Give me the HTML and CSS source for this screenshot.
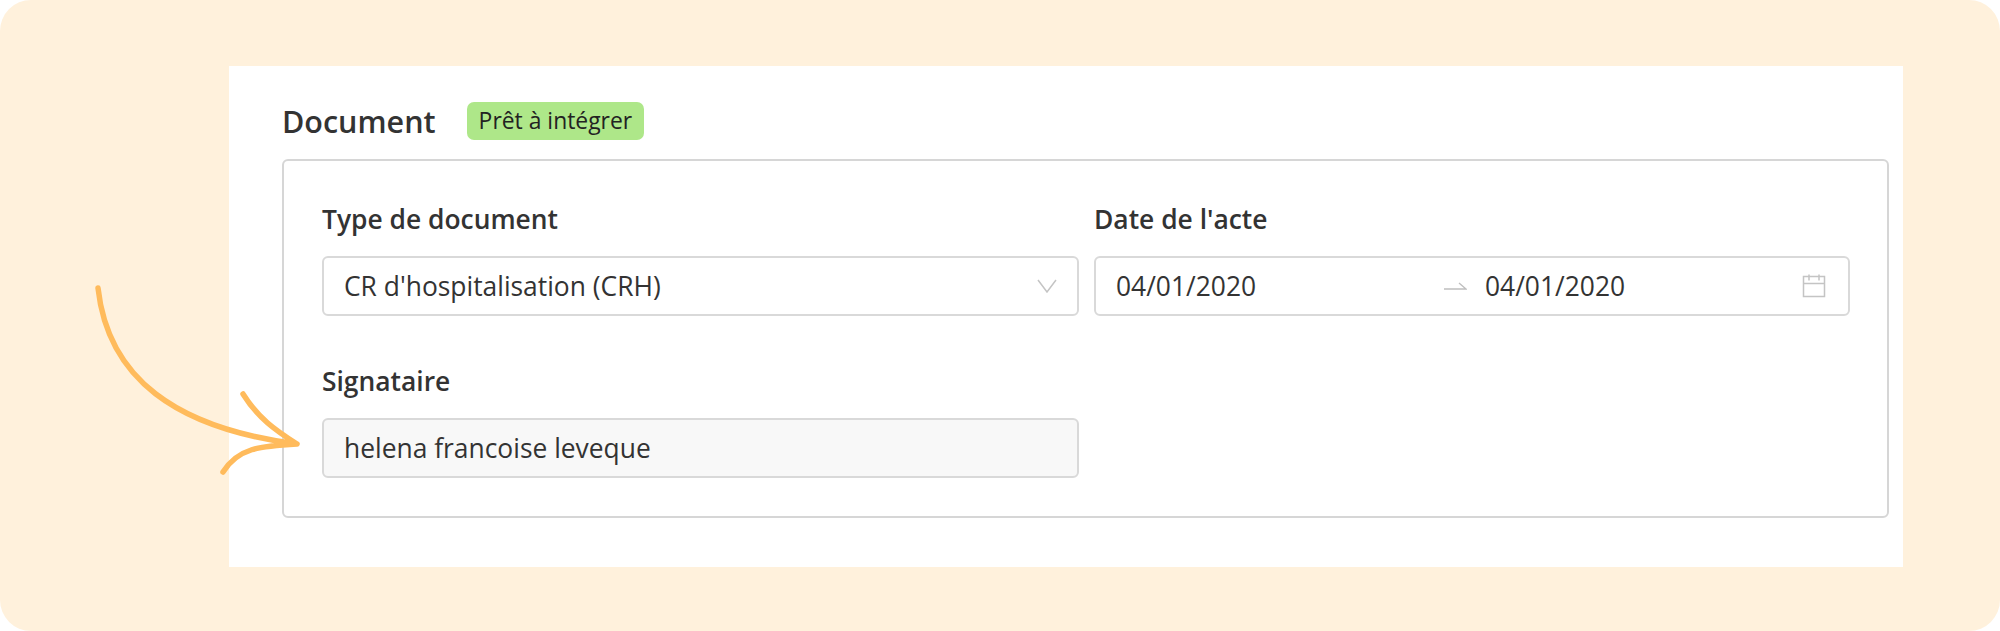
FILE: index.html
```html
<!DOCTYPE html>
<html lang="fr">
<head>
  <meta charset="UTF-8">
  <title>Document</title>
  <link rel="stylesheet" href="styles.css">
</head>
<body>

  <div class="frame">
    <div class="panel">
      <div class="doc-header">
        <h2>Document</h2>
        <span class="badge">Prêt à intégrer</span>
      </div>

      <div class="card">
        <div class="field">
          <label>Type de document</label>
          <div class="control">
            <span>CR d'hospitalisation (CRH)</span>
            <svg class="chevron" width="20" height="14" viewBox="0 0 20 14"><path d="M1 1 L10 13 L19 1" fill="none" stroke="#c4c4c4" stroke-width="1.5"/></svg>
          </div>
        </div>

        <div class="field">
          <label>Date de l'acte</label>
          <div class="control date-range">
            <span class="date-from">04/01/2020</span>
            <svg class="range-arrow" width="23" height="8" viewBox="0 0 23 8"><path d="M0 7 H22 L15 1" fill="none" stroke="#bfbfbf" stroke-width="1.4"/></svg>
            <span class="date-to">04/01/2020</span>
            <svg class="calendar" width="24" height="24" viewBox="0 0 24 24"><path d="M1.5 2.5 H22.5 V22.5 H1.5 Z M1.5 9.5 H22.5 M7 0.5 V6.5 M17 0.5 V6.5" fill="none" stroke="#c4c4c4" stroke-width="1.5"/></svg>
          </div>
        </div>

        <div class="field">
          <label>Signataire</label>
          <div class="control disabled">helena francoise leveque</div>
        </div>
      </div>
    </div>

    <!-- hand drawn arrow, sits over the panel edge -->
    <svg class="pointer" width="220" height="200" viewBox="0 0 220 200">
      <path d="M8 8 C18 98 85 148 207 164 M153 114 C168 138 185 150 207 164 C170 166 148 168 133 192" fill="none" stroke="#ffbb5c" stroke-width="5.5" stroke-linecap="round" stroke-linejoin="round"/>
    </svg>
  </div>

</body>
</html>
```

FILE: styles.css
```css
* {
  box-sizing: border-box;
}

body {
  margin: 0;
  background: #fff;
  font-family: 'Open Sans', sans-serif;
  color: #333;
}

.frame {
  position: relative;
  width: 2000px;
  height: 631px;
  padding: 66px 97px 64px 229px;
  background: #fff1dc;
  border-radius: 31px;
  overflow: hidden;
}

.panel {
  height: 100%;
  padding: 36px 14px 0 53px;
  background: #fff;
}

.doc-header {
  display: flex;
  align-items: center;
  gap: 31px;
  height: 38px;
  margin-bottom: 19px;
}

h2 {
  margin: 0;
  font-size: 30.5px;
  font-weight: 600;
  line-height: 38px;
}

.badge {
  display: block;
  padding: 0 12px;
  background: #aee789;
  border-radius: 7px;
  font-size: 22.9px;
  line-height: 38px;
  color: #222;
}

.card {
  display: grid;
  grid-template-columns: 757px 756px;
  align-content: start;
  column-gap: 15px;
  row-gap: 50px;
  height: 359px;
  padding: 43px 37px 0 38px;
  border: 2px solid #d6d6d6;
  border-radius: 6px;
}

label {
  display: block;
  margin-bottom: 22px;
  font-size: 26.4px;
  font-weight: 600;
  line-height: 30px;
}

.control {
  display: flex;
  align-items: center;
  justify-content: space-between;
  height: 60px;
  padding: 0 20px;
  border: 2px solid #d9d9d9;
  border-radius: 6px;
  font-size: 26.4px;
}

.disabled {
  background: #f8f8f8;
}

.date-range {
  justify-content: flex-start;
  padding-left: 20px;
  padding-right: 21px;
}

.date-from {
  width: 328px;
}

.date-to {
  width: 317px;
  margin-left: 18px;
}

.pointer {
  position: absolute;
  left: 90px;
  top: 280px;
}
```
